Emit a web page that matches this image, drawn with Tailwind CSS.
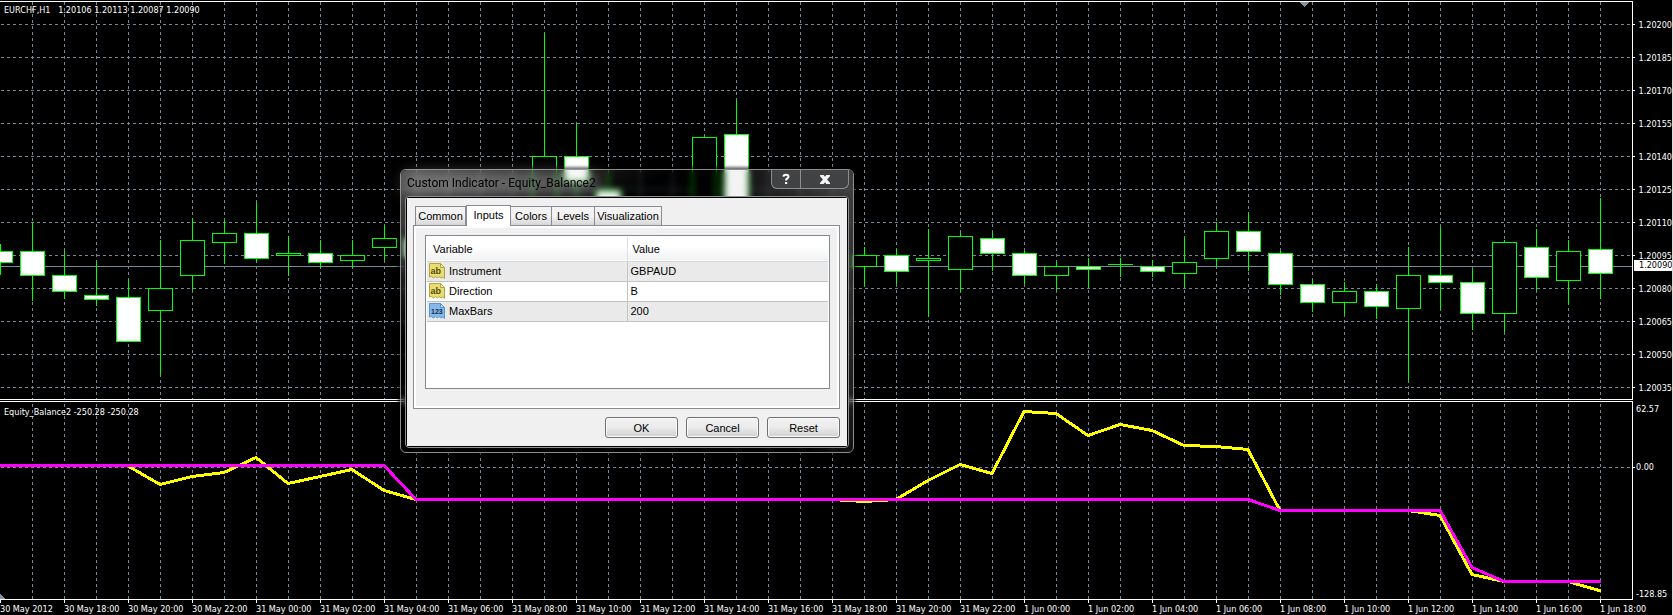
<!DOCTYPE html>
<html lang="en">
<head>
<meta charset="utf-8">
<title>EURCHF,H1</title>
<script src="https://cdn.jsdelivr.net/npm/@tailwindcss/browser@4"></script>
</head>
<body class="bg-black text-white">
<main class="relative flex min-h-screen flex-col overflow-hidden border-r border-[#dcdcdc] bg-black font-['DejaVu_Sans_Condensed','Liberation_Sans',sans-serif] text-[9px] leading-3">

  <!-- Price window -->
  <section class="flex h-[400px]" aria-label="Price chart">
    <div class="relative min-w-0 flex-1 overflow-hidden">
      <svg class="block h-full w-full" shape-rendering="crispEdges" aria-hidden="true">
        <defs>
          <pattern id="gridV" x="32" y="2" width="32" height="6" patternUnits="userSpaceOnUse"><rect width="1" height="3" fill="#778899"/></pattern>
          <pattern id="gridH" x="1" y="24" width="6" height="33" patternUnits="userSpaceOnUse"><rect width="3" height="1" fill="#778899"/></pattern>
        </defs>
        <rect x="1" y="2" width="100%" height="397" fill="url(#gridV)"/>
        <rect y="2" width="100%" height="397" fill="url(#gridH)"/>
        <rect y="266" width="100%" height="1" fill="#778899"/>
        <rect y="1" width="100%" height="1" fill="#fff"/>
        <rect y="399" width="100%" height="1" fill="#fff"/>
        <path d="M1300 2h9l-4 5h-1z" fill="#8292a4"/>
        <g id="candles"></g>
      </svg>
      <p class="absolute left-1 top-1 whitespace-pre">EURCHF,H1   1.20106 1.20113 1.20087 1.20090</p>
    </div>
    <div class="relative mt-px w-10 border-l border-white">
      <ol class="flex flex-col pt-[7px]">
        <li class="flex h-[33px] items-center gap-1 before:h-px before:w-0.5 before:bg-white">1.20200</li>
        <li class="flex h-[33px] items-center gap-1 before:h-px before:w-0.5 before:bg-white">1.20185</li>
        <li class="flex h-[33px] items-center gap-1 before:h-px before:w-0.5 before:bg-white">1.20170</li>
        <li class="flex h-[33px] items-center gap-1 before:h-px before:w-0.5 before:bg-white">1.20155</li>
        <li class="flex h-[33px] items-center gap-1 before:h-px before:w-0.5 before:bg-white">1.20140</li>
        <li class="flex h-[33px] items-center gap-1 before:h-px before:w-0.5 before:bg-white">1.20125</li>
        <li class="flex h-[33px] items-center gap-1 before:h-px before:w-0.5 before:bg-white">1.20110</li>
        <li class="flex h-[33px] items-center gap-1 before:h-px before:w-0.5 before:bg-white">1.20095</li>
        <li class="flex h-[33px] items-center gap-1 before:h-px before:w-0.5 before:bg-white">1.20080</li>
        <li class="flex h-[33px] items-center gap-1 before:h-px before:w-0.5 before:bg-white">1.20065</li>
        <li class="flex h-[33px] items-center gap-1 before:h-px before:w-0.5 before:bg-white">1.20050</li>
        <li class="flex h-[33px] items-center gap-1 before:h-px before:w-0.5 before:bg-white">1.20035</li>
      </ol>
      <span class="absolute left-px top-[259px] h-[11px] w-[38px] bg-white pl-[5px] leading-[11px] text-black">1.20090</span>
    </div>
  </section>

  <!-- Indicator window -->
  <section class="mt-px flex h-[199px]" aria-label="Equity_Balance2">
    <div class="relative min-w-0 flex-1 overflow-hidden">
      <svg class="block h-full w-full" shape-rendering="crispEdges" aria-hidden="true">
        <defs>
          <pattern id="gridV2" x="32" y="3" width="32" height="6" patternUnits="userSpaceOnUse"><rect width="1" height="3" fill="#778899"/></pattern>
          <pattern id="gridH2" x="1" y="66" width="6" height="400" patternUnits="userSpaceOnUse"><rect width="3" height="1" fill="#778899"/></pattern>
        </defs>
        <rect x="1" y="1" width="100%" height="197" fill="url(#gridV2)"/>
        <rect y="1" width="100%" height="197" fill="url(#gridH2)"/>
        <rect width="100%" height="1" fill="#fff"/>
        <rect y="198" width="100%" height="1" fill="#fff"/>
        <path d="M0 193l5 5H0z" fill="#8292a4"/>
        <g transform="translate(0 -401)" fill="none" stroke-width="3">
          <polyline stroke="#ff0" points="128,466 160,484.500 192,476.500 224,472.500 256,457.500 288,483.500 320,476.500 352,469.500 384,490.500 416,499.500 832,499.500 864,501.500 896,499.500 928,480.500 960,464.500 992,473.500 1024,411.500 1056,413.500 1088,435.500 1120,424.500 1152,430.500 1184,445.500 1216,446.500 1248,449.500 1280,510.500 1408,510.500 1440,515.500 1472,574.500 1504,581.500 1568,581.500 1601,591"/>
          <polyline stroke="#f0f" points="0,465.5 384,465.5 416,499.5 1248,499.5 1280,510.5 1440,510.5 1472,567.5 1504,581.5 1601,581.5"/>
        </g>
      </svg>
      <p class="absolute left-1 top-[5px] whitespace-pre">Equity_Balance2 -250.28 -250.28</p>
    </div>
    <ol class="relative flex w-10 flex-col justify-between border-l border-white pt-0.5 pl-[3px]">
      <li>62.57</li>
      <li class="absolute left-[3px] top-[60px] before:absolute before:-left-[3px] before:top-1.5 before:h-px before:w-0.5 before:bg-white">0.00</li>
      <li>-128.85</li>
    </ol>
  </section>

  <!-- Time scale -->
  <ol id="times" class="flex h-[15px] overflow-hidden whitespace-nowrap"></ol>

  <!-- Dialog -->
  <div role="dialog" aria-labelledby="dlg-title" class="absolute left-[400px] top-[169px] flex w-[454px] flex-col rounded-md border border-[#8d8d8d] bg-[#15191b]/5 px-1 pb-1 font-['Liberation_Sans',sans-serif] text-[11px] text-black shadow-[0_0_3px_2px_rgba(0,0,0,0.6)] backdrop-blur-[3px]">
    <span class="pointer-events-none absolute inset-0 rounded-md bg-linear-to-br from-white/30 via-transparent via-30% to-transparent"></span>
    <span class="pointer-events-none absolute inset-y-0 right-0 w-1/4 rounded-md bg-linear-to-bl from-white/25 to-transparent to-70%"></span>
    <header class="relative flex h-[26px] items-start justify-between">
      <h1 id="dlg-title" class="relative mt-1 ml-0.5 font-['Roboto',sans-serif] text-[12px] leading-[18px] font-normal"><span class="absolute -inset-x-1 inset-y-0 rounded-full bg-white/35 blur-sm"></span><span class="relative">Custom Indicator - Equity_Balance2</span></h1>
      <div class="flex h-[19px] rounded-b-md border border-t-0 border-[#8d8d8d] bg-[#404244]">
        <button type="button" aria-label="Help" class="flex w-[29px] items-center justify-center border-r border-[#8d8d8d]">
          <svg width="10" height="12" viewBox="0 0 10 12" fill="none"><path d="M2.500 3.600C2.600 1.200 7.500 1.200 7.500 3.700 7.500 5.500 5 5.300 5 7.500" stroke="#fff" stroke-width="2"/><path d="M4 9h2.200v2H4z" fill="#fff"/></svg>
        </button>
        <button type="button" aria-label="Close" class="flex w-[47px] items-center justify-center">
          <svg width="10" height="9" viewBox="0 0 11 10"><path d="M0 0h4l1.500 2L7 0h4v1.500L7.800 5 11 8.500V10H7L5.500 8 4 10H0V8.500L3.200 5 0 1.500z" fill="#f4f4f4"/></svg>
        </button>
      </div>
    </header>
    <div class="relative flex flex-col rounded-sm border border-[#909294] bg-black p-px">
     <div class="flex flex-col bg-[#f0f0f0] pt-[7px] pr-[7px] pb-2 pl-1.5">
      <div role="tablist" class="flex items-end pl-0.5">
        <button role="tab" type="button" class="h-[19px] w-[51px] border border-b-0 border-[#898c95] bg-linear-to-b from-[#f3f3f3] from-50% to-[#d6d6d6]">Common</button>
        <button role="tab" aria-selected="true" type="button" class="relative z-10 -mb-px h-[21px] w-[45px] border border-b-0 border-[#898c95] bg-white pb-0.5">Inputs</button>
        <button role="tab" type="button" class="h-[19px] w-10 border-y border-[#898c95] border-b-0 bg-linear-to-b from-[#f3f3f3] from-50% to-[#d6d6d6]">Colors</button>
        <button role="tab" type="button" class="h-[19px] w-[43px] border border-b-0 border-r-0 border-[#898c95] bg-linear-to-b from-[#f3f3f3] from-50% to-[#d6d6d6]">Levels</button>
        <button role="tab" type="button" class="h-[19px] w-[68px] border border-b-0 border-[#898c95] bg-linear-to-b from-[#f3f3f3] from-50% to-[#d6d6d6]">Visualization</button>
      </div>
      <div role="tabpanel" class="flex h-[184px] flex-col border border-[#898c95] bg-white p-0.5">
        <div class="flex-1 bg-[#f0f0f0] px-[7px] pt-[7px]">
          <div class="ml-0.5 h-[154px] border border-[#828790] bg-white p-px">
            <table class="w-full table-fixed border-collapse text-left">
              <thead>
                <tr class="h-[24px] border-b border-[#d5d5d5] bg-linear-to-b from-white from-40% to-[#f1f2f4]">
                  <th class="w-[200px] border-r border-[#e0e3e6] pl-1.5 font-normal">Variable</th>
                  <th class="pl-[5px] font-normal">Value</th>
                </tr>
              </thead>
              <tbody>
                <tr class="h-5 border-b border-[#c3c3c3] bg-[#eaeaea]">
                  <td class="border-r border-[#c3c3c3] pl-0.5"><span class="flex items-center gap-1"><svg width="16" height="16" viewBox="0 0 16 16"><path d="M.5 .5h11l4 4v11l-2-1.500-1.500 1-2-1.500-1.500 1.500-2-1.500-2 1.500-2-1.500-2 .5z" fill="#e9dd75" stroke="#b3a437"/><path d="M11.500 .5v4h4z" fill="#fbf6bd" stroke="#b3a437"/><text x="1.500" y="11" font-family="Liberation Sans" font-weight="700" font-size="9" fill="#544b0a">ab</text></svg>Instrument</span></td>
                  <td class="pl-[3px]">GBPAUD</td>
                </tr>
                <tr class="h-5 border-b border-[#c3c3c3]">
                  <td class="border-r border-[#c3c3c3] pl-0.5"><span class="flex items-center gap-1"><svg width="16" height="16" viewBox="0 0 16 16"><path d="M.5 .5h11l4 4v11l-2-1.500-1.500 1-2-1.500-1.500 1.500-2-1.500-2 1.500-2-1.500-2 .5z" fill="#e9dd75" stroke="#b3a437"/><path d="M11.500 .5v4h4z" fill="#fbf6bd" stroke="#b3a437"/><text x="1.500" y="11" font-family="Liberation Sans" font-weight="700" font-size="9" fill="#544b0a">ab</text></svg>Direction</span></td>
                  <td class="pl-[3px]">B</td>
                </tr>
                <tr class="h-5 border-b border-[#c3c3c3] bg-[#eaeaea]">
                  <td class="border-r border-[#c3c3c3] pl-0.5"><span class="flex items-center gap-1"><svg width="16" height="16" viewBox="0 0 16 16"><path d="M.5 .5h11l4 4v11l-2-1.500-1.500 1-2-1.500-1.500 1.500-2-1.500-2 1.500-2-1.500-2 .5z" fill="#84b9ea" stroke="#5a94cc"/><path d="M11.500 .5v4h4z" fill="#c5e0fa" stroke="#5a94cc"/><text x="2" y="11" font-family="Liberation Sans" font-weight="700" font-size="7" fill="#0d2b52">123</text></svg>MaxBars</span></td>
                  <td class="pl-[3px]">200</td>
                </tr>
              </tbody>
            </table>
          </div>
        </div>
      </div>
      <div class="flex justify-end gap-2 pt-2">
        <button type="button" class="h-[21px] w-[73px] rounded-[3px] border border-[#707070] bg-linear-to-b from-[#f2f2f2] via-[#ebebeb] via-50% to-[#cfcfcf] shadow-[inset_0_0_0_1px_#fafafa]">OK</button>
        <button type="button" class="h-[21px] w-[73px] rounded-[3px] border border-[#707070] bg-linear-to-b from-[#f2f2f2] via-[#ebebeb] via-50% to-[#cfcfcf] shadow-[inset_0_0_0_1px_#fafafa]">Cancel</button>
        <button type="button" class="h-[21px] w-[73px] rounded-[3px] border border-[#707070] bg-linear-to-b from-[#f2f2f2] via-[#ebebeb] via-50% to-[#cfcfcf] shadow-[inset_0_0_0_1px_#fafafa]">Reset</button>
      </div>
     </div>
    </div>
  </div>
</main>
<script>
// Each candle: x, high, body top, body bottom, low, 1 = bearish (white)
const candles = [
 [0,244,251,262,274,1],[32,222,251,275,300,1],[64,251,275,291,298,1],[96,262,295,299,305,1],[128,280,297,341,341,1],
 [160,240,288,310,374,0],[192,218,240,275,289,0],[224,220,233,242,263,0],[256,203,233,258,261,1],[288,236,253,255,275,0],
 [320,240,253,262,267,1],[352,240,255,260,267,0],[384,225,238,247,259,0],[416,230,238,257,262,1],
 [544,33,156,215,230,0],[576,124,156,181,200,1],[608,172,190,230,240,1],[704,137,137,230,240,0],[736,101,134,230,240,1],
 [864,247,255,266,285,0],[896,249,255,271,283,1],[928,229,258,260,316,0],[960,233,236,269,291,0],
 [992,233,238,253,270,1],[1024,251,253,275,283,1],[1056,262,266,275,289,0],[1088,258,266,269,287,1],[1120,258,264,264,276,0],
 [1152,260,266,271,276,1],[1184,237,262,273,287,0],[1216,222,231,258,266,0],[1248,213,231,251,270,1],[1280,251,253,284,294,1],
 [1312,280,284,302,311,1],[1344,282,291,302,314,0],[1376,284,291,306,318,1],[1408,247,275,308,380,0],[1440,227,275,282,309,1],
 [1472,269,282,313,329,1],[1504,240,242,313,331,0],[1536,229,247,277,289,1],[1568,240,251,280,304,0],[1600,198,249,273,298,1]
];
document.getElementById('candles').innerHTML = candles.map(([x, h, t, b, l, down]) =>
  `<rect x="${x}" y="${h}" width="1" height="${l - h + 1}" fill="#0f0"/>` +
  `<rect x="${x - 12}" y="${t}" width="25" height="${b - t + 1}" fill="#0f0"/>` +
  (b - t > 1 ? `<rect x="${x - 11}" y="${t + 1}" width="23" height="${b - t - 1}" fill="${down ? '#fff' : '#000'}"/>` : '')
).join('');

const times = ['30 May 2012', '30 May 18:00', '30 May 20:00', '30 May 22:00'];
for (let h = 0; h < 24; h += 2) times.push('31 May ' + String(h).padStart(2, '0') + ':00');
for (let h = 0; h < 20; h += 2) times.push('1 Jun ' + String(h).padStart(2, '0') + ':00');
document.getElementById('times').innerHTML = times.map(t =>
  `<li class="w-16 shrink-0 before:block before:h-[3px] before:w-px before:bg-white">${t}</li>`).join('');
</script>
</body>
</html>
